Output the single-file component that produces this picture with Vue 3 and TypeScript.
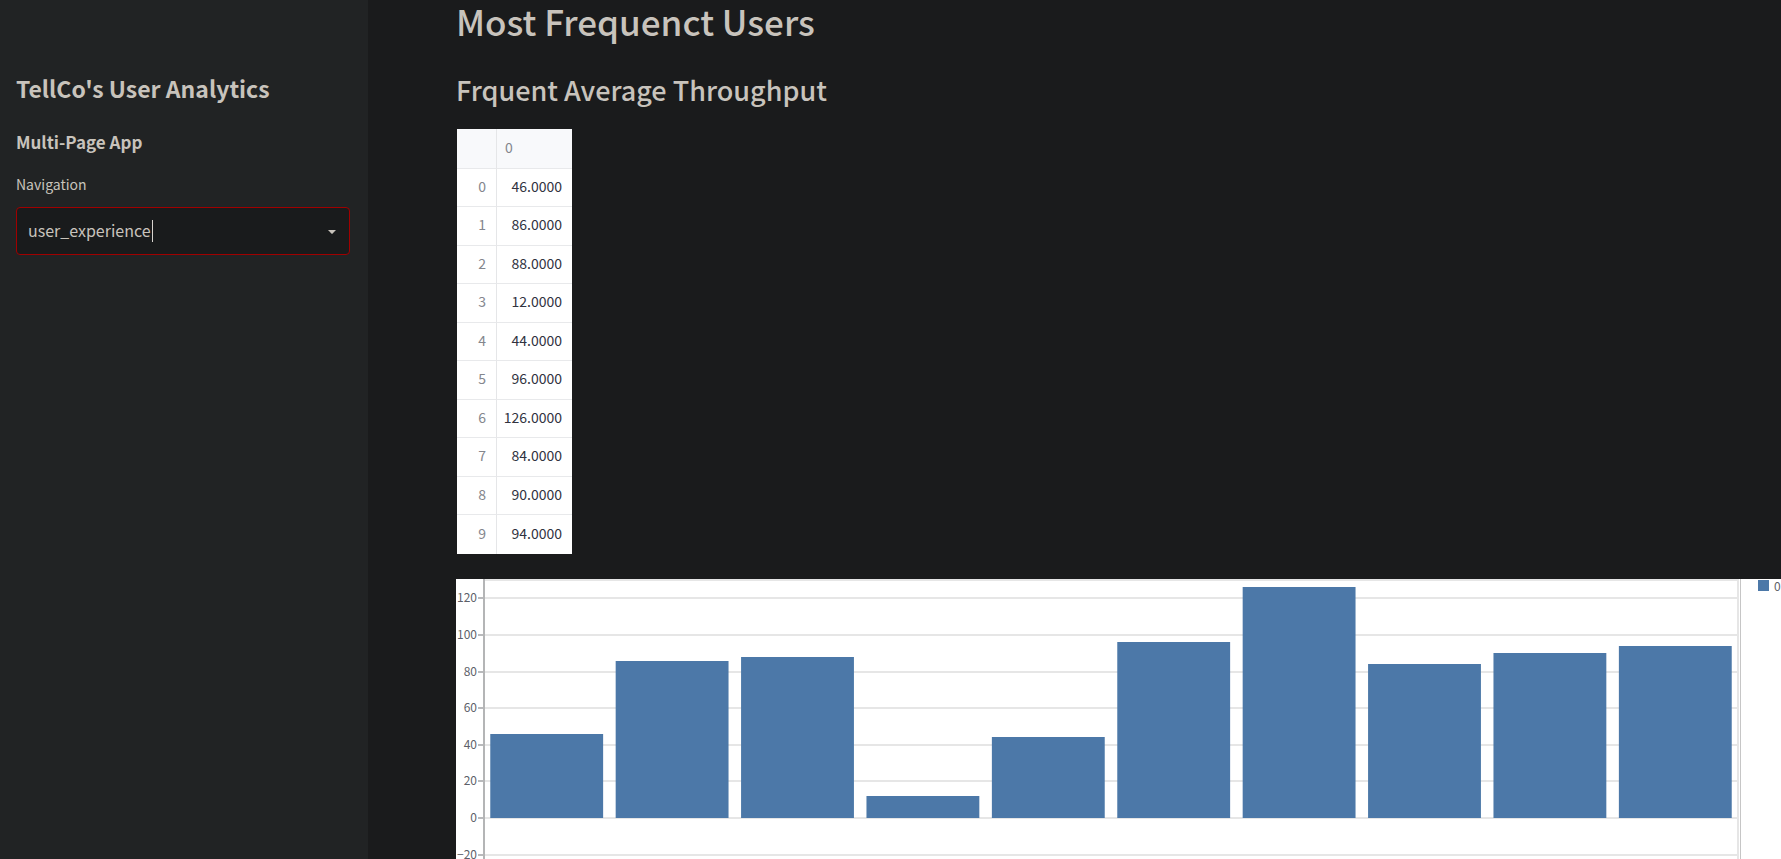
<script setup lang="ts">
import { ref } from 'vue'

const pages = ['user_experience', 'user_overview', 'user_engagement', 'user_satisfaction']
const page = ref('user_experience')

const values = [46, 86, 88, 12, 44, 96, 126, 84, 90, 94]
const ticks = [120, 100, 80, 60, 40, 20, 0, -20]

// Vertical scale: the top of the visible domain sits on the upper edge of the plot.
const domainTop = 130
const pixelsPerUnit = 1.83
const yOf = (value: number) => Math.round((domainTop - value) * pixelsPerUnit) + 1

// Horizontal band scale, in percent of the plot width.
const band = 100 / values.length
const barX = (index: number) => `${(index + 0.05) * band}%`
const barWidth = `${band * 0.9}%`

const tickLabel = (tick: number) => (tick < 0 ? `−${-tick}` : String(tick))
</script>

<template>
  <div class="app">
    <aside class="sidebar">
      <h1 class="brand">TellCo's User Analytics</h1>
      <h2 class="subtitle">Multi-Page App</h2>
      <label class="label" for="navigation">Navigation</label>
      <div class="picker">
        <select id="navigation" v-model="page" class="select">
          <option v-for="name in pages" :key="name" :value="name">{{ name }}</option>
        </select>
        <span class="cursor" aria-hidden="true"></span>
        <svg class="arrow" viewBox="0 0 8 4" aria-hidden="true">
          <path d="M0 0H8L4.6 3.6Q4 4.2 3.4 3.6Z" />
        </svg>
      </div>
    </aside>

    <main class="main">
      <h2 class="title">Most Frequenct Users</h2>
      <h3 class="heading">Frquent Average Throughput</h3>

      <table class="table">
        <thead>
          <tr>
            <th class="corner"></th>
            <th class="column" scope="col">0</th>
          </tr>
        </thead>
        <tbody>
          <tr v-for="(value, index) in values" :key="index">
            <th class="index" scope="row">{{ index }}</th>
            <td class="value">{{ value.toFixed(4) }}</td>
          </tr>
        </tbody>
      </table>

      <section class="chart" aria-label="Average throughput bar chart">
        <svg class="axis">
          <g v-for="tick in ticks" :key="tick">
            <text class="tick-label" x="21" :y="yOf(tick) + 4">{{ tickLabel(tick) }}</text>
            <line class="tick" x1="22" x2="28" :y1="yOf(tick)" :y2="yOf(tick)" />
          </g>
        </svg>
        <svg class="plot">
          <line class="grid" x1="0" x2="100%" y1="1" y2="1" />
          <line
            v-for="tick in ticks"
            :key="tick"
            class="grid"
            x1="0"
            x2="100%"
            :y1="yOf(tick)"
            :y2="yOf(tick)"
          />
          <line class="grid" x1="100%" x2="100%" y1="0" y2="100%" />
          <line class="axis-line" x1="0" x2="0" y1="0" y2="100%" />
          <rect
            v-for="(value, index) in values"
            :key="index"
            class="bar"
            :x="barX(index)"
            :y="yOf(value)"
            :width="barWidth"
            :height="yOf(0) - yOf(value)"
          />
        </svg>
        <div class="edge"></div>
        <div class="legend">
          <span class="swatch"></span>
          <span>0</span>
        </div>
      </section>
    </main>
  </div>
</template>

<style>
body {
  margin: 0;
  background: #1a1b1c;
}
</style>

<style scoped>
.app {
  display: flex;
  height: 100vh;
  overflow: hidden;
  background: #1a1b1c;
  color: #c8c3bc;
  font-family: "Source Sans Pro", "Noto Sans CJK SC", "Noto Sans", sans-serif;
}

.sidebar {
  box-sizing: border-box;
  flex: 0 0 368px;
  padding: 71px 18px 0 16px;
  background: #212324;
}

h1,
h2,
h3 {
  margin: 0;
  font-weight: 500;
}

.brand {
  font-size: 23px;
  font-weight: 600;
  line-height: 34px;
}

.subtitle {
  margin-top: 25px;
  font-size: 17px;
  font-weight: 600;
  line-height: 24px;
}

.label {
  display: block;
  margin-top: 20px;
  font-size: 14px;
  line-height: 20px;
}

.picker {
  position: relative;
  margin-top: 13px;
}

.select {
  display: block;
  box-sizing: border-box;
  width: 100%;
  height: 48px;
  padding: 0 40px 2px 11px;
  border: 1px solid #a00000;
  border-radius: 4px;
  outline: none;
  appearance: none;
  background: #191b1c;
  color: #c8c3bc;
  font: inherit;
  font-size: 16px;
}

.cursor {
  position: absolute;
  top: 13px;
  left: 136px;
  width: 1px;
  height: 22px;
  background: #d8d4cf;
}

.arrow {
  position: absolute;
  top: 23px;
  right: 14px;
  width: 8px;
  height: 4px;
  fill: #c8c3bc;
}

.main {
  flex: 1;
  min-width: 0;
  padding-left: 88px;
  overflow: hidden;
}

.title {
  font-size: 35px;
  line-height: 42px;
}

.heading {
  margin-top: 29px;
  font-size: 27px;
  line-height: 38px;
}

.table {
  margin: 20px 0 0 1px;
  border-collapse: separate;
  border-spacing: 0;
  background: #fff;
  font-size: 14px;
  line-height: 20px;
}

.table th,
.table td {
  box-sizing: border-box;
  height: 38px;
  padding: 0 10px 4px;
  border-bottom: 1px solid #e8e9eb;
  font-weight: 400;
}

.table tbody tr:nth-child(even) > * {
  height: 39px;
}

.table thead th {
  height: 40px;
  padding-bottom: 3px;
  background: #f8f9fb;
}

.table tbody tr:last-child > * {
  border-bottom: 0;
}

.table .corner,
.table .index {
  width: 40px;
  border-right: 1px solid #e5e6e8;
}

.table .column {
  width: 75px;
  padding-left: 8px;
  color: #84868d;
  text-align: left;
}

.table .index {
  color: #84868d;
  text-align: right;
}

.table .value {
  padding-left: 6px;
  color: #31333f;
  text-align: right;
}

.chart {
  display: flex;
  height: 366px;
  margin-top: 25px;
  background: #fff;
  color: #5d5f69;
  font-size: 12px;
  line-height: 14px;
}

.axis {
  flex: 0 0 28px;
  width: 28px;
  height: 100%;
}

.tick-label {
  fill: #5d5f69;
  text-anchor: end;
}

.tick {
  stroke: #b9babc;
  stroke-width: 2;
}

.plot {
  flex: 1;
  min-width: 0;
  height: 100%;
  overflow: visible;
}

.grid {
  stroke: #e6e6e6;
  stroke-width: 2;
}

.axis-line {
  stroke: #b4b5b6;
  stroke-width: 2;
}

.bar {
  fill: #4c78a8;
}

.edge {
  flex: 0 0 1px;
  margin-left: 2px;
  background: #c6c6c6;
}

.legend {
  display: flex;
  flex: 0 0 23px;
  gap: 5px;
  padding-left: 17px;
}

.swatch {
  flex: 0 0 11px;
  height: 11px;
  margin-top: 1px;
  background: #4c78a8;
}
</style>
